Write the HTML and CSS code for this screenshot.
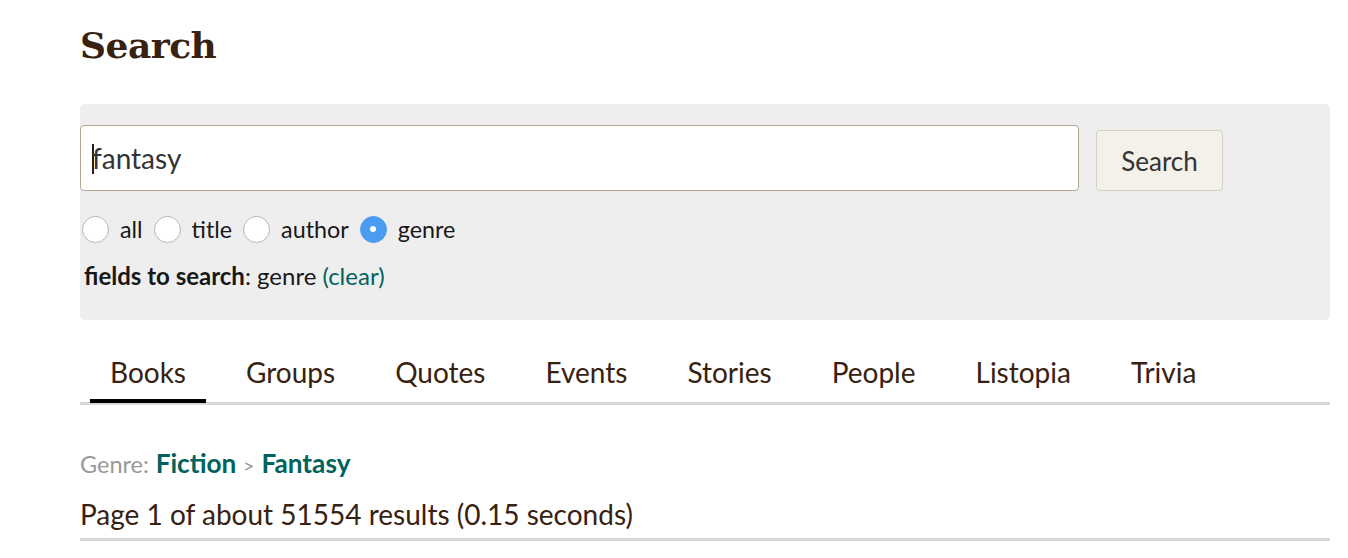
FILE: index.html
```html
<!DOCTYPE html>
<html>
<head>
<meta charset="utf-8">
<link rel="stylesheet" href="styles.css">
</head>
<body>
<div class="page">
  <h1 class="title">Search</h1>
  <div class="searchBox">
    <div class="searchRow">
      <div class="field"><span class="caret"></span>fantasy</div>
      <button class="searchBtn">Search</button>
    </div>
    <div class="radios">
      <label class="radio"><span class="dot"></span>all</label>
      <label class="radio"><span class="dot"></span>title</label>
      <label class="radio"><span class="dot"></span>author</label>
      <label class="radio"><span class="dot on"></span>genre</label>
    </div>
    <div class="fields"><b>fields to search</b>: genre <a class="clear">(clear)</a></div>
  </div>
  <nav class="tabs">
    <span class="tab active">Books</span>
    <span class="tab">Groups</span>
    <span class="tab">Quotes</span>
    <span class="tab">Events</span>
    <span class="tab">Stories</span>
    <span class="tab">People</span>
    <span class="tab">Listopia</span>
    <span class="tab">Trivia</span>
  </nav>
  <div class="genre"><span class="glabel">Genre:</span> <a class="glink">Fiction</a> <span class="gsep">&gt;</span> <a class="glink">Fantasy</a></div>
  <div class="results">Page 1 of about 51554 results (0.15 seconds)</div>
  <div class="rule"></div>
</div>
</body>
</html>
```

FILE: styles.css
```css
html, body {
  margin: 0;
  padding: 0;
  background: #fff;
}
.page {
  width: 1250px;
  margin-left: 80px;
  font-family: Lato, "Open Sans", sans-serif;
  color: #382110;
}
.title {
  margin: 0;
  padding-top: 22px;
  height: 104px;
  box-sizing: border-box;
  font-family: "DejaVu Serif", serif;
  font-weight: bold;
  font-size: 36px;
  line-height: 46px;
  color: #382110;
  letter-spacing: -0.5px;
}
.searchBox {
  background: #eeeeee;
  border-radius: 5px;
  height: 216px;
  box-sizing: border-box;
  padding-top: 21px;
}
.searchRow {
  display: flex;
  align-items: flex-start;
}
.field {
  width: 999px;
  height: 66px;
  box-sizing: border-box;
  background: #fff;
  border: 1px solid #b4a590;
  border-radius: 4px;
  padding-left: 11px;
  font-size: 28px;
  line-height: 64px;
  color: #333;
  display: flex;
  align-items: center;
}
.caret {
  display: inline-block;
  width: 2px;
  height: 30px;
  background: #222;
  margin-right: -2px;
  margin-top: 2px;
}
.searchBtn {
  margin-left: 17px;
  margin-top: 5px;
  width: 127px;
  height: 61px;
  box-sizing: border-box;
  background: #f4f1ea;
  border: 1px solid #d6d0c4;
  border-radius: 4px;
  font-family: Lato, sans-serif;
  font-size: 26px;
  color: #333;
  padding: 0;
}
.radios {
  display: flex;
  align-items: center;
  margin-top: 23px;
  margin-left: 2px;
  height: 30px;
  gap: 11px;
}
.radio {
  display: flex;
  align-items: center;
  font-size: 23.3px;
  color: #181818;
}
.dot {
  width: 27px;
  height: 27px;
  box-sizing: border-box;
  border-radius: 50%;
  background: #fff;
  border: 1px solid #b5b5b5;
  margin-right: 11px;
  position: relative;
}
.dot.on {
  background: #4a9cf2;
  border-color: #4a9cf2;
}
.dot.on::after {
  content: "";
  position: absolute;
  left: 9.5px;
  top: 9.5px;
  width: 6px;
  height: 6px;
  border-radius: 50%;
  background: #fff;
}
.fields {
  margin-top: 17px;
  margin-left: 4px;
  font-size: 24px;
  line-height: 30px;
  color: #181818;
}
.fields b {
  font-weight: bold;
}
.clear {
  color: #00635d;
}
.tabs {
  display: flex;
  margin-top: 22px;
  border-bottom: 3px solid #d8d8d8;
  padding-left: 10px;
}
.tab {
  padding: 13px 20px 10px;
  margin-right: 20px;
  font-size: 28px;
  line-height: 34px;
  border-bottom: 4px solid transparent;
  margin-bottom: -1px;
}
.tab.active {
  border-bottom-color: #000;
}
.genre {
  margin-top: 43px;
  font-size: 26.2px;
  line-height: 30px;
}
.glabel {
  color: #999;
  font-size: 23.5px;
}
.gsep {
  color: #999;
  font-size: 20px;
}
.glink {
  color: #00635d;
  font-weight: bold;
}
.results {
  margin-top: 18px;
  font-size: 28px;
  line-height: 32px;
}
.rule {
  margin-top: 8px;
  height: 3px;
  background: #d8d8d8;
}
```
